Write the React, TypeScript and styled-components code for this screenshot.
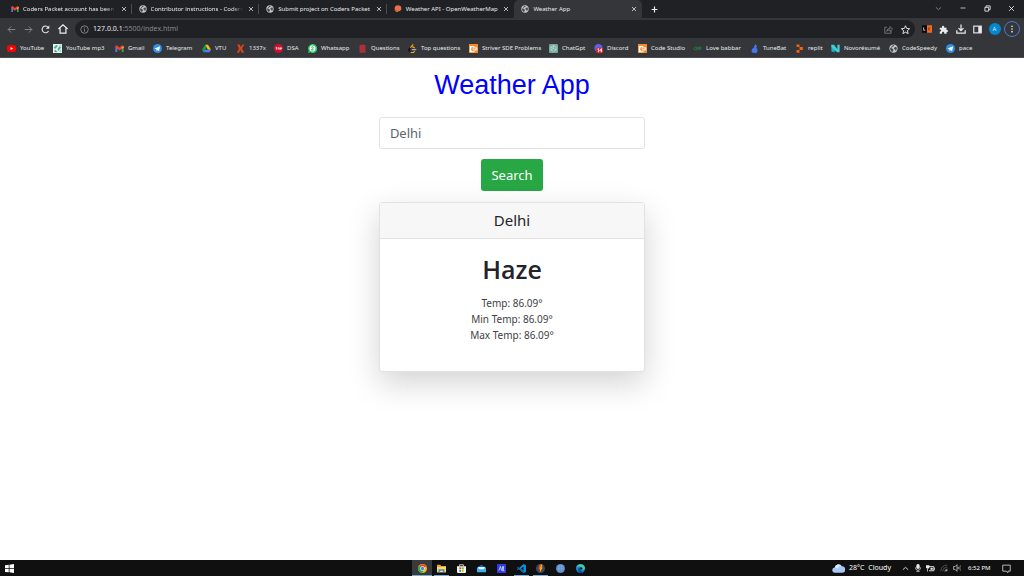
import React from "react";
import styled, { createGlobalStyle, css } from "styled-components";

const GlobalStyle = createGlobalStyle`
  *, *::before, *::after { box-sizing: border-box; }
  body { margin: 0; background: #fff; }
  button, input { font: inherit; color: inherit; }
  h1, h2, p, ul { margin: 0; padding: 0; }
`;

const uiFont = `"Noto Sans", "Open Sans", sans-serif`;

const Screen = styled.div`
  display: flex;
  flex-direction: column;
  min-height: 100vh;
  font-family: ${uiFont};
`;

/* ---------- icons ---------- */

const Svg = styled.svg<{ $size: number }>`
  display: block;
  flex: none;
  width: ${(p) => p.$size}px;
  height: ${(p) => p.$size}px;
`;

const line = { fill: "none", stroke: "currentColor", strokeWidth: 2 } as const;

const art = {
  gmail: (
    <>
      <path d="M1 21V6l5 3v12z" fill="#4285f4" />
      <path d="M18 21V9l5-3v15z" fill="#34a853" />
      <path d="M1 5l4-2 7 6 7-6 4 2v4l-11 8L1 9z" fill="#ea4335" />
      <path d="M18 9l5-4v5l-5 3z" fill="#fbbc04" />
    </>
  ),
  globe: (
    <>
      <circle cx="12" cy="12" r="11" fill="#c4c7cb" />
      <path d="M3 10l6 2 3 3-1 3-2 3C5 20 3 16 3 10zM10 3l4 0-1 3-4 1-1 3-3-1zM14 9l5-2 2 5-2 5-2 1-1-4-3-1z" fill="#45484c" />
    </>
  ),
  weather: (
    <>
      <circle cx="12" cy="11" r="10" fill="#eb6e4b" />
      <path d="M12 22l2-5 3 2 4-4 2 7z" fill="#202124" />
      <path d="M1 15h8l1 3H3z" fill="#c7512f" />
    </>
  ),
  youtube: (
    <>
      <rect x="0" y="3" width="24" height="18" rx="5" fill="#f00" />
      <path d="M9.500 8l7 4-7 4z" fill="#fff" />
    </>
  ),
  mp3: (
    <>
      <rect width="24" height="24" fill="#e8f3ef" />
      <path d="M2 9l7-7 4 3-7 8zM12 13l6-8 4 4-8 10zM3 18l4-3 5 7H5z" fill="#45b394" />
      <path d="M14 2h8v4zM16 19l6-4v7z" fill="#8fd3bf" />
    </>
  ),
  telegram: (
    <>
      <circle cx="12" cy="12" r="12" fill="#2f8fe6" />
      <path d="M4 12l15-6-3 13-4-3-2 3-1-5z" fill="#fff" />
    </>
  ),
  drive: (
    <>
      <path d="M8 2h8l8 13h-8z" fill="#fbbc04" />
      <path d="M8 2l4 7-8 13-4-7z" fill="#0f9d58" />
      <path d="M8 15h16l-4 7H4z" fill="#4285f4" />
    </>
  ),
  x1337: <path d="M3 1h7l3 7 4-7h5l-6 11 6 11h-7l-3-7-4 7H2l6-11z" fill="#d8441c" />,
  dsa: (
    <>
      <circle cx="12" cy="12" r="12" fill="#d4112c" />
      <path d="M4 10h5M6.500 10v5M11 15v-5h3v5M17 15v-5h3v3h-3" fill="none" stroke="#fff" strokeWidth="1.800" />
    </>
  ),
  whatsapp: (
    <>
      <path d="M12 0a12 12 0 1 1-6 22l-6 2 2-6A12 12 0 0 1 12 0z" fill="#25d366" />
      <circle cx="12" cy="12" r="8" fill="#fff" />
      <path d="M9 9q3-3 5 0 0 2-5 7h6" fill="none" stroke="#12a84a" strokeWidth="2.500" />
    </>
  ),
  questions: <path d="M4 3q8-4 16 0v20H4z" fill="#a83238" />,
  leet: (
    <>
      <path d="M14 1L6 10" fill="none" stroke="#f5a623" strokeWidth="3" />
      <path d="M6 10l-3 4q-1 3 1 5l4 3" fill="none" stroke="#141414" strokeWidth="4" />
      <path d="M7 22q5 2 8 0l3-3M10 8q4-1 8 3" fill="none" stroke="#f5a623" strokeWidth="3" />
      <path d="M10 15h12" stroke="#b8b8b8" strokeWidth="3" />
    </>
  ),
  studio: (
    <>
      <rect width="24" height="24" fill="#f68b28" />
      <path d="M2 5h12v3H8l-2 3v5l2 3h7v3H2z" fill="#fff" />
      <path d="M10 9h12v8H10z" fill="#fff" />
      <path d="M12 11l3 4m0-4l-3 4M17 11l3 4" stroke="#f68b28" strokeWidth="2" />
    </>
  ),
  chatgpt: (
    <>
      <rect width="24" height="24" rx="3" fill="#74aa9c" />
      <path d="M12 4l7 4v8l-7 4-7-4V8zM12 4v8l7 4M5 8l7 4-7 4" fill="none" stroke="#d9ebe6" strokeWidth="1.500" />
    </>
  ),
  discord: (
    <>
      <circle cx="12" cy="11" r="11" fill="#5865f2" />
      <rect x="5" y="9" width="19" height="15" rx="5" fill="#e0202a" />
      <path d="M9 14l3-2v10M20 22V12l-5 6h7" fill="none" stroke="#fff" strokeWidth="2" />
    </>
  ),
  babbar: <path d="M11 10q-5-4-8 0t2 5 7-2h-4M13 13q5 4 8 0t-2-5-7 3h9" fill="none" stroke="#2a7a3d" strokeWidth="2.500" />,
  tunebat: <path d="M14 0q4 4 5 7l-3 2q4 3 4 8 0 7-8 7-8 0-8-6 0-5 6-8z" fill="#4876ee" />,
  replit: (
    <>
      <path d="M4 1h8v7H4zM4 16h8v7H4z" fill="#f26207" />
      <path d="M12 8h9v8h-9z" fill="#f26207" />
    </>
  ),
  novo: (
    <>
      <path d="M1 2l9 5v15l-9-2z" fill="#18b5c4" />
      <path d="M1 2h7l9 12V2h6v20h-7L1 8z" fill="#3fd0d4" />
    </>
  ),
  close: <path d="M4 4l16 16M20 4L4 20" {...line} strokeWidth={3} />,
  plus: <path d="M12 2v20M2 12h20" {...line} strokeWidth={4} />,
  back: <path d="M22 12H3M11 4l-8 8 8 8" {...line} strokeWidth={2.5} />,
  forward: <path d="M2 12h19M13 4l8 8-8 8" {...line} strokeWidth={2.5} />,
  reload: (
    <>
      <path d="M20 16a9 9 0 1 1-1-10" {...line} strokeWidth={3} />
      <path d="M22 1v9h-9z" fill="currentColor" />
    </>
  ),
  home: <path d="M1 12L12 2l11 10M5 10v12h14V10" {...line} strokeWidth={3} />,
  info: (
    <>
      <circle cx="12" cy="12" r="10" {...line} />
      <path d="M12 11v7M12 6v3" {...line} />
    </>
  ),
  share: <path d="M8 6H2v16h17v-6M7 17q1-8 9-8V4l7 7-7 6v-4q-6 0-9 4z" {...line} />,
  star: <path d="M12 2l3 7 8 1-6 5 2 8-7-4-7 4 2-8-6-5 8-1z" {...line} strokeWidth={2.5} />,
  ext: (
    <>
      <rect x="0" y="3" width="12" height="18" fill="#080808" />
      <rect x="12" y="3" width="12" height="18" fill="#f36c21" />
      <path d="M4 8v7h4" fill="none" stroke="#ddd" strokeWidth="2" />
      <path d="M16 8v7M20 8l-4 4 4 4" fill="none" stroke="#8d3b10" strokeWidth="2" />
    </>
  ),
  puzzle: <path d="M2 7h6V5a3 3 0 0 1 6 0v2h6v6h1a3 3 0 0 1 0 6h-1v4h-6v-2a3 3 0 0 0-6 0v2H2v-6h2a3 3 0 0 0 0-5H2z" fill="currentColor" />,
  download: <path d="M12 1v14M6 10l6 6 6-6M2 15v7h20v-7" {...line} strokeWidth={3} />,
  panel: (
    <>
      <rect x="2" y="3" width="20" height="18" {...line} strokeWidth={3} />
      <path d="M14 3h8v18h-8z" fill="currentColor" />
    </>
  ),
  dots: (
    <>
      <circle cx="12" cy="4" r="2.500" fill="currentColor" />
      <circle cx="12" cy="12" r="2.500" fill="currentColor" />
      <circle cx="12" cy="20" r="2.500" fill="currentColor" />
    </>
  ),
  chevronDown: <path d="M3 8l9 8 9-8" {...line} strokeWidth={3} />,
  chevronUp: <path d="M3 16l9-8 9 8" {...line} strokeWidth={3} />,
  minimise: <path d="M2 12h20" {...line} strokeWidth={3} />,
  restore: <path d="M3 8h13v13H3zM7 8V3h14v13h-5" {...line} strokeWidth={3} />,
  windows: <path d="M0 3l10-1v9H0zM12 2l12-2v11H12zM0 13h10v9L0 21zM12 13h12v11l-12-2z" fill="#fff" />,
  chrome: (
    <>
      <circle cx="12" cy="12" r="12" fill="#fbbc04" />
      <path d="M12 12L2 6a12 12 0 0 1 20 0z" fill="#ea4335" />
      <path d="M12 12L2 5a12 12 0 0 0 9 19l5-9z" fill="#34a853" />
      <circle cx="12" cy="12" r="6" fill="#fff" />
      <circle cx="12" cy="12" r="4.500" fill="#4285f4" />
    </>
  ),
  explorer: (
    <>
      <path d="M0 2h9l2 3h13v17H0z" fill="#e9a92b" />
      <path d="M0 8h24v14H0z" fill="#ffd766" />
      <path d="M4 22v-8h16v8h-4v-4H8v4z" fill="#3b8ede" />
    </>
  ),
  store: (
    <>
      <path d="M7 6V2h10v4" fill="none" stroke="#fff" strokeWidth="2" />
      <path d="M0 6h24v15q0 3-3 3H3q-3 0-3-3z" fill="#f3f3f3" />
      <path d="M6 9h5v5H6z" fill="#f25022" />
      <path d="M13 9h5v5h-5z" fill="#7fba00" />
      <path d="M6 16h5v5H6z" fill="#00a4ef" />
      <path d="M13 16h5v5h-5z" fill="#ffb900" />
    </>
  ),
  mail: (
    <>
      <path d="M0 9l12-7 12 7v12H0z" fill="#1267b4" />
      <path d="M3 8h18v7H3z" fill="#e8f4fd" />
      <path d="M0 9l12 8 12-8v13H0z" fill="#35b1f1" />
    </>
  ),
  media: (
    <>
      <rect width="24" height="24" fill="#3438e2" />
      <path d="M5 18L9 6l3 11 4-11v11M14 18h6M18 6l-2 12" fill="none" stroke="#cfe1ff" strokeWidth="2" />
    </>
  ),
  vscode: (
    <>
      <path d="M17 0l7 3v18l-7 3L5 13l-3 3-2-2 4-4 1 1z" fill="#168bd2" />
      <path d="M0 9l2-2 16 12-1 5zM17 7v10l-7-5z" fill="#0b64ab" />
      <path d="M17 7v10l-6-5z" fill="#101010" />
    </>
  ),
  flame: (
    <>
      <circle cx="12" cy="12" r="12" fill="#45484d" />
      <path d="M12 1h5l-2 8h3l-8 14 1-9H7z" fill="#ffb12b" />
      <path d="M9 2h4l-2 12H7z" fill="#e2542b" />
    </>
  ),
  orb: (
    <>
      <circle cx="12" cy="12" r="12" fill="#5b8bc9" />
      <path d="M4 8q8-7 16 0M3 14q9-6 18 0M8 3v18M15 3v18" fill="none" stroke="#86abdc" strokeWidth="2" />
    </>
  ),
  edge: (
    <>
      <circle cx="12" cy="12" r="12" fill="#1683d8" />
      <path d="M1 10C3-2 21-3 24 10q0 7-8 6 4-8-4-9-7-1-11 3z" fill="#45cf8c" />
      <path d="M13 9q-5 7 2 11 4 1 7-1-5 7-13 4-7-6 0-13z" fill="#0a4a95" />
      <circle cx="14" cy="12" r="3" fill="#101010" />
    </>
  ),
  cloud: (
    <>
      <path d="M6 20a5 5 0 0 1-1-10 7 7 0 0 1 13-2 6 6 0 0 1 1 12z" fill="#a9c8f5" />
      <path d="M5 11a7 7 0 0 1 13-3q-6-2-7 4-3-2-6-1z" fill="#dfeafc" />
    </>
  ),
  mic: (
    <>
      <rect x="7" y="0" width="10" height="15" rx="5" fill="currentColor" />
      <path d="M4 10q0 9 8 9t8-9M12 19v4M7 23h10" {...line} />
    </>
  ),
  battery: (
    <>
      <path d="M6 7h15v11H8" {...line} strokeWidth={2.5} />
      <path d="M12 10h6v5h-6zM22 10h2v5h-2zM0 3h9v7q-4 5-9 0z" fill="currentColor" />
      <path d="M4 13v7" {...line} />
    </>
  ),
  wifi: (
    <>
      <path d="M2 22Q4 4 22 3M8 22q1-12 14-13M14 22q0-6 8-7" fill="none" stroke="#6c6c6c" strokeWidth="2" />
      <path d="M13 22h9v-8z" fill="#a8a8a8" />
    </>
  ),
  speaker: (
    <>
      <path d="M1 8h5l6-6v20l-6-6H1z" {...line} />
      <path d="M15 9q2 3 0 6" {...line} />
      <path d="M18 6q4 6 0 12M22 3q4 9 0 18" fill="none" stroke="#777" strokeWidth="2" />
    </>
  ),
  note: <path d="M2 3h20v16h-6v4l-5-4H2z" {...line} />,
};

type IconName = keyof typeof art;

const Icon = ({ name, size = 9 }: { name: IconName; size?: number }) => (
  <Svg $size={size} viewBox="0 0 24 24" aria-hidden="true">
    {art[name]}
  </Svg>
);

/* ---------- browser: tabs ---------- */

const TabStrip = styled.header`
  display: flex;
  height: 18px;
  padding-left: 4px;
  background: #202124;
  color: #e8eaed;
`;

const Tabs = styled.div`
  display: flex;
  flex: 0 1 638px;
  min-width: 0;
`;

const Tab = styled.div<{ $active?: boolean; $divider?: boolean }>`
  display: flex;
  flex: 1 1 0;
  align-items: center;
  gap: 4px;
  min-width: 0;
  padding: 0 4px 0 7px;
  border-radius: 5px 5px 0 0;
  font-size: 6px;
  line-height: 10px;
  background: ${(p) => (p.$active ? "#35363a" : "transparent")};
  ${(p) =>
    p.$divider &&
    css`
      background: linear-gradient(#4a4c50, #4a4c50) right center / 1px 10px no-repeat;
    `}
`;

const TabTitle = styled.span<{ $fade?: boolean }>`
  flex: 1;
  min-width: 0;
  white-space: nowrap;
  ${(p) =>
    p.$fade &&
    css`
      mask-image: linear-gradient(to right, #000 88%, transparent);
    `}
`;

const IconButton = styled.button<{ $width: number; $dim?: boolean }>`
  display: grid;
  place-items: center;
  flex: none;
  width: ${(p) => p.$width}px;
  padding: 0;
  border: 0;
  background: none;
  color: ${(p) => (p.$dim ? "#85878b" : "#e8eaed")};
`;

const WindowControls = styled.div`
  display: flex;
  margin-left: auto;
  padding-bottom: 2px;
`;

/* ---------- browser: toolbar ---------- */

const Toolbar = styled.nav`
  display: flex;
  align-items: center;
  height: 22px;
  padding: 0 4px 0 3px;
  background: #35363a;
`;

const ToolGroup = styled.div`
  display: flex;
  align-items: center;
`;

const AddressBar = styled.div`
  display: flex;
  flex: 1;
  align-items: center;
  gap: 4px;
  height: 18px;
  margin: 0 3px 0 4px;
  padding: 0 1px 0 5px;
  border-radius: 9px;
  background: #202124;
  color: #9aa0a6;
`;

const Address = styled.a`
  flex: 1;
  font-size: 7px;
  line-height: 10px;
  color: #85898e;
  text-decoration: none;
`;

const Host = styled.span`
  color: #e8eaed;
`;

const Avatar = styled.span`
  display: grid;
  place-items: center;
  width: 12px;
  height: 12px;
  border-radius: 50%;
  background: #0288d1;
  font-size: 6px;
  line-height: 12px;
`;

const MenuRing = styled.span`
  display: grid;
  place-items: center;
  width: 16px;
  height: 16px;
  border: 1px solid #4a78d0;
  border-radius: 50%;
`;

/* ---------- browser: bookmarks ---------- */

const BookmarkBar = styled.ul`
  display: flex;
  align-items: center;
  height: 18px;
  padding: 0 0 1px 7px;
  border-bottom: 1px solid #4a4b4f;
  background: #35363a;
  list-style: none;
  overflow: hidden;
`;

const BookmarkItem = styled.li<{ $width: number }>`
  flex: none;
  width: ${(p) => p.$width}px;
`;

const BookmarkLink = styled.a`
  display: flex;
  align-items: center;
  gap: 4px;
  font-size: 6px;
  line-height: 10px;
  color: #e8eaed;
  text-decoration: none;
  white-space: nowrap;
`;

/* ---------- web page ---------- */

const Page = styled.main`
  display: flex;
  flex: 1;
  flex-direction: column;
  align-items: center;
  padding: 11px 0 32px;
  background: #fff;
  color: #212529;
`;

const Title = styled.h1`
  font: 400 27px/32px "Liberation Sans", Arial, sans-serif;
  color: #00f;
`;

const SearchForm = styled.form`
  display: flex;
  flex-direction: column;
  align-items: center;
  gap: 10px;
  width: 26%;
  min-width: 240px;
  margin: 16px 0 11px;
  font-size: 13px;
  line-height: 20px;
`;

const CityInput = styled.input`
  width: 100%;
  height: 32px;
  padding: 0 10px;
  border: 1px solid #dfe3e7;
  border-radius: 3px;
  background: #fff;
  color: #5c646b;
`;

const SearchButton = styled.button`
  height: 32px;
  padding: 0 10px;
  border: 0;
  border-radius: 3px;
  background: #28a745;
  color: #fff;
`;

const Card = styled.article`
  width: 26%;
  min-width: 240px;
  border: 1px solid #e2e2e2;
  border-radius: 3px;
  background: #fff;
  box-shadow: 0 11px 32px rgba(0, 0, 0, 0.175);
  text-align: center;
`;

const CardHeader = styled.div`
  padding: 6px 14px;
  border-bottom: 1px solid #e4e4e4;
  background: #f7f7f7;
  font-size: 15px;
  line-height: 23px;
`;

const CardBody = styled.div`
  padding: 14px 14px 28px;
`;

const Condition = styled.h2`
  margin-bottom: 10px;
  font: 600 25px/32px "Open Sans", "Noto Sans", sans-serif;
`;

const Reading = styled.p`
  font-size: 10px;
  line-height: 16px;
  color: #3d4145;
`;

/* ---------- taskbar ---------- */

const Taskbar = styled.footer`
  display: flex;
  height: 16px;
  background: #101010;
  color: #fff;
`;

const Apps = styled.div`
  display: flex;
  width: 178px;
  margin-left: 38.4%;
`;

const AppButton = styled.button<{ $running?: boolean; $active?: boolean }>`
  display: grid;
  place-items: center;
  flex: 1;
  padding: 0;
  border: 0;
  background: ${(p) =>
    p.$running
      ? `linear-gradient(#76a9d8, #76a9d8) center bottom / ${p.$active ? "100%" : "15px"} 1px no-repeat`
      : "none"};
  background-color: ${(p) => (p.$active ? "#3a3a3a" : "transparent")};
`;

const Tray = styled.div`
  display: flex;
  align-items: stretch;
  margin-left: auto;
  padding-right: 9px;
  font-size: 7px;
  line-height: 16px;
  white-space: nowrap;
`;

const Weather = styled.span`
  display: flex;
  align-items: center;
  gap: 4px;
  margin-right: 8px;
`;

const Clock = styled.time`
  width: 34px;
  padding-left: 5px;
  font-size: 6px;
`;

/* ---------- data ---------- */

const tabs: { icon: IconName; title: string; fade?: boolean }[] = [
  { icon: "gmail", title: "Coders Packet account has been", fade: true },
  { icon: "globe", title: "Contributor instructions - Coders", fade: true },
  { icon: "globe", title: "Submit project on Coders Packet" },
  { icon: "weather", title: "Weather API - OpenWeatherMap" },
  { icon: "globe", title: "Weather App" },
];

const bookmarks: [IconName, string, number][] = [
  ["youtube", "YouTube", 46],
  ["mp3", "YouTube mp3", 62],
  ["gmail", "Gmail", 38],
  ["telegram", "Telegram", 49],
  ["drive", "VTU", 34],
  ["x1337", "1337x", 38],
  ["dsa", "DSA", 34],
  ["whatsapp", "Whatsapp", 50],
  ["questions", "Questions", 50],
  ["leet", "Top questions", 61],
  ["studio", "Striver SDE Problems", 80],
  ["chatgpt", "ChatGpt", 45],
  ["discord", "Discord", 44],
  ["studio", "Code Studio", 55],
  ["babbar", "Love babbar", 57],
  ["tunebat", "TuneBat", 45],
  ["replit", "replit", 36],
  ["novo", "Novorésumé", 58],
  ["globe", "CodeSpeedy", 57],
  ["telegram", "pace", 34],
];

const apps: { icon: IconName; label: string; running?: boolean; active?: boolean }[] = [
  { icon: "chrome", label: "Chrome", running: true, active: true },
  { icon: "explorer", label: "File Explorer", running: true },
  { icon: "store", label: "Store" },
  { icon: "mail", label: "Mail" },
  { icon: "media", label: "Media" },
  { icon: "vscode", label: "Visual Studio Code", running: true },
  { icon: "flame", label: "Player", running: true },
  { icon: "orb", label: "Network" },
  { icon: "edge", label: "Edge" },
];

const readings = ["Temp: 86.09°", "Min Temp: 86.09°", "Max Temp: 86.09°"];

const Tool = ({
  icon,
  label,
  width = 17,
  size = 10,
  dim,
}: {
  icon: IconName;
  label: string;
  width?: number;
  size?: number;
  dim?: boolean;
}) => (
  <IconButton type="button" aria-label={label} $width={width} $dim={dim}>
    <Icon name={icon} size={size} />
  </IconButton>
);

export default function App() {
  return (
    <Screen>
      <GlobalStyle />
      <TabStrip>
        <Tabs>
          {tabs.map((tab, i) => (
            <Tab key={tab.title} $active={i === 4} $divider={i < 3}>
              <Icon name={tab.icon} size={8} />
              <TabTitle $fade={tab.fade}>{tab.title}</TabTitle>
              <Tool icon="close" label="Close tab" width={8} size={6} />
            </Tab>
          ))}
        </Tabs>
        <Tool icon="plus" label="New tab" width={24} size={7} />
        <WindowControls>
          <Tool icon="chevronDown" label="Search tabs" width={24} size={7} dim />
          <Tool icon="minimise" label="Minimise" width={25} size={6} />
          <Tool icon="restore" label="Restore" width={24} size={7} />
          <Tool icon="close" label="Close" width={25} size={7} />
        </WindowControls>
      </TabStrip>

      <Toolbar>
        <ToolGroup>
          <Tool icon="back" label="Back" size={9} dim />
          <Tool icon="forward" label="Forward" size={9} dim />
          <Tool icon="reload" label="Reload" size={9} />
          <Tool icon="home" label="Home" />
        </ToolGroup>
        <AddressBar>
          <Icon name="info" size={9} />
          <Address href="#">
            <Host>127.0.0.1</Host>:5500/index.html
          </Address>
          <ToolGroup>
            <Tool icon="share" label="Share" size={9} dim />
            <Tool icon="star" label="Bookmark" size={9} />
          </ToolGroup>
        </AddressBar>
        <ToolGroup>
          <Tool icon="ext" label="Extension" />
          <Tool icon="puzzle" label="Extensions" size={9} />
          <Tool icon="download" label="Downloads" />
          <Tool icon="panel" label="Side panel" size={9} />
          <IconButton type="button" $width={17}>
            <Avatar>A</Avatar>
          </IconButton>
          <IconButton type="button" aria-label="Menu" $width={17}>
            <MenuRing>
              <Icon name="dots" size={8} />
            </MenuRing>
          </IconButton>
        </ToolGroup>
      </Toolbar>

      <BookmarkBar>
        {bookmarks.map(([icon, label, width]) => (
          <BookmarkItem key={label} $width={width}>
            <BookmarkLink href="#">
              <Icon name={icon} size={9} />
              {label}
            </BookmarkLink>
          </BookmarkItem>
        ))}
      </BookmarkBar>

      <Page>
        <Title>Weather App</Title>
        <SearchForm onSubmit={(e) => e.preventDefault()}>
          <CityInput type="text" aria-label="City" defaultValue="Delhi" />
          <SearchButton type="submit">Search</SearchButton>
        </SearchForm>
        <Card>
          <CardHeader>Delhi</CardHeader>
          <CardBody>
            <Condition>Haze</Condition>
            {readings.map((text) => (
              <Reading key={text}>{text}</Reading>
            ))}
          </CardBody>
        </Card>
      </Page>

      <Taskbar>
        <Tool icon="windows" label="Start" width={19} size={9} />
        <Apps>
          {apps.map((app) => (
            <AppButton key={app.label} type="button" aria-label={app.label} $running={app.running} $active={app.active}>
              <Icon name={app.icon} size={9} />
            </AppButton>
          ))}
        </Apps>
        <Tray>
          <Weather>
            <Icon name="cloud" size={13} />
            <span>28°C</span>
            <span>Cloudy</span>
          </Weather>
          <Tool icon="chevronUp" label="Hidden icons" width={12} size={7} />
          <Tool icon="mic" label="Microphone" width={13} size={8} />
          <Tool icon="battery" label="Battery" width={13} size={9} />
          <Tool icon="wifi" label="Network" width={13} size={8} />
          <Tool icon="speaker" label="Volume" width={13} size={8} />
          <Clock>6:52 PM</Clock>
          <Tool icon="note" label="Notifications" width={18} size={9} />
        </Tray>
      </Taskbar>
    </Screen>
  );
}
